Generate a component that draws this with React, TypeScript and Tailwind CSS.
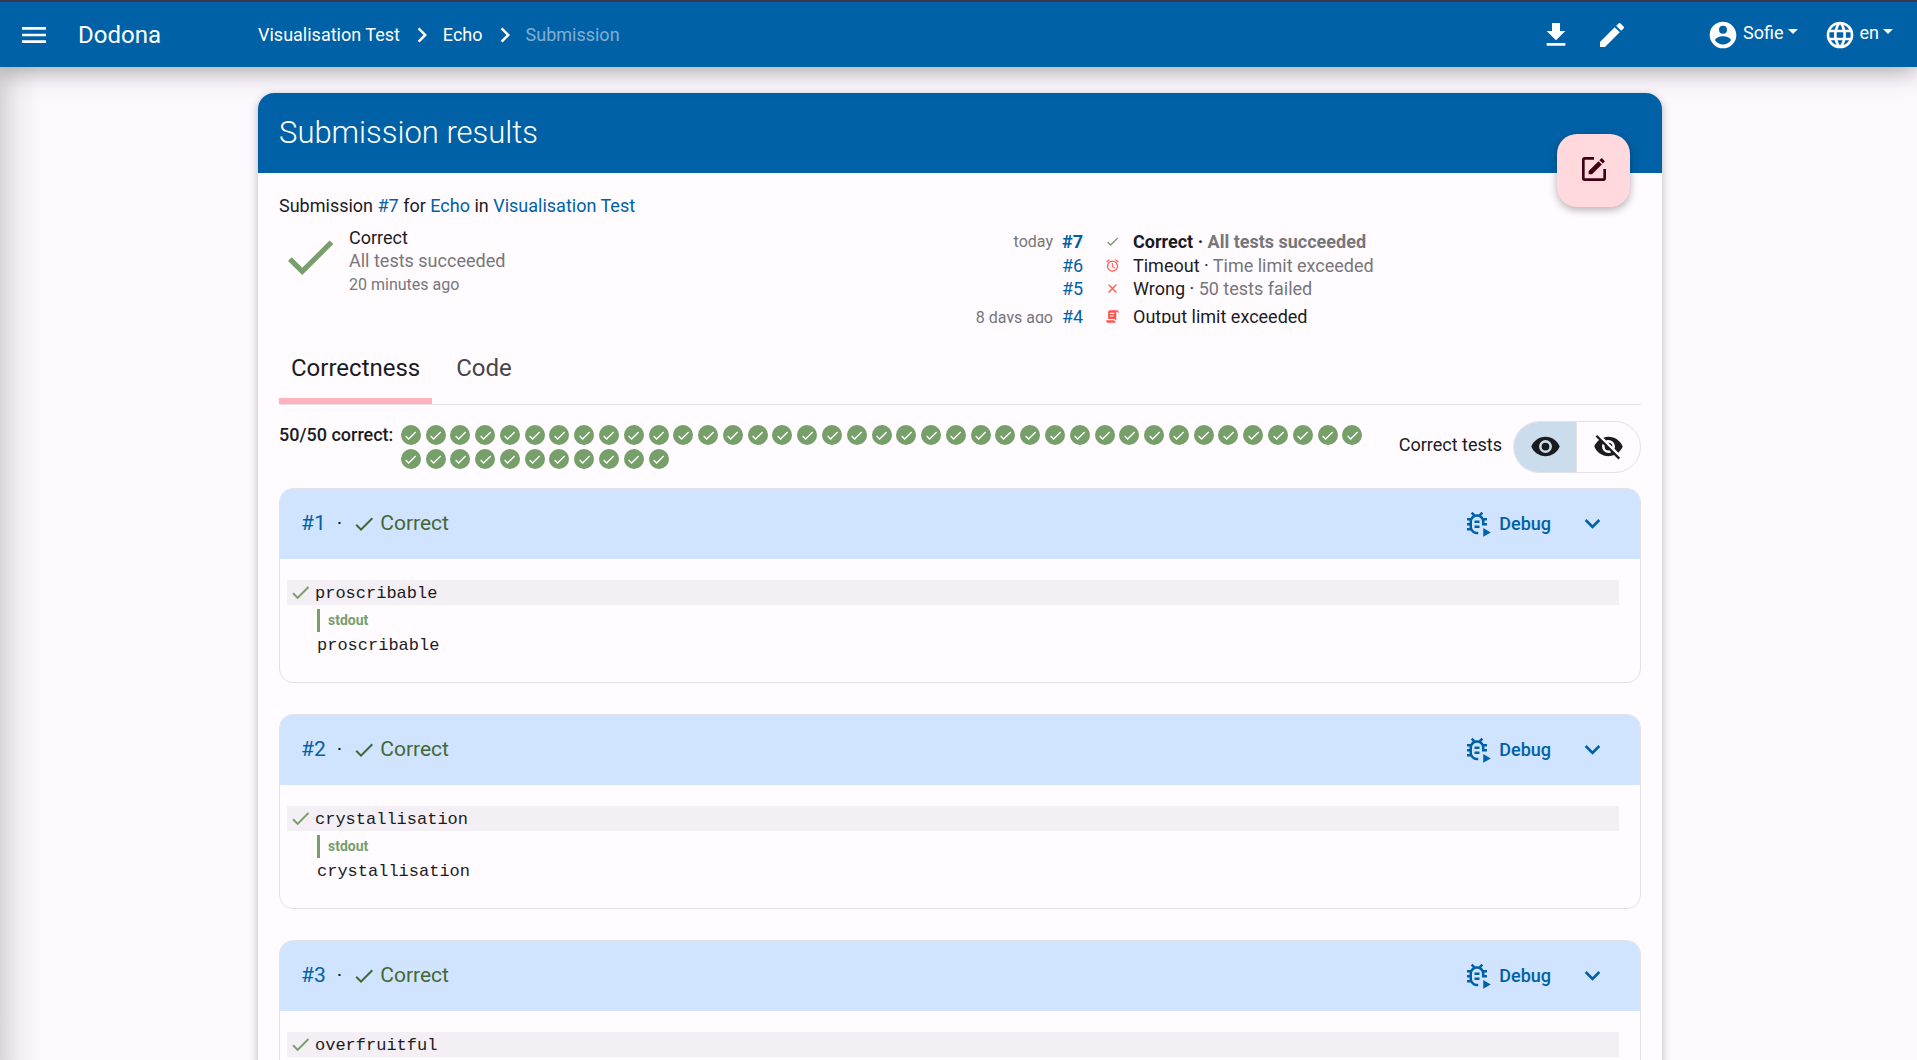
import type { ReactNode } from 'react'

const icons = {
  menu: 'M3,6H21V8H3V6M3,11H21V13H3V11M3,16H21V18H3V16Z',
  chevronRight: 'M8.59,16.58L13.17,12L8.59,7.41L10,6L16,12L10,18L8.59,16.58Z',
  chevronDown: 'M7.41,8.58L12,13.17L16.59,8.58L18,10L12,16L6,10L7.41,8.58Z',
  download: 'M5,20H19V18H5M19,9H15V3H9V9H5L12,16L19,9Z',
  pencil:
    'M20.71,7.04C21.1,6.65 21.1,6 20.71,5.63L18.37,3.29C18,2.9 17.35,2.9 16.96,3.29L15.12,5.12L18.87,8.87M3,17.25V21H6.75L17.81,9.93L14.06,6.18L3,17.25Z',
  account:
    'M12,19.2C9.5,19.2 7.29,17.92 6,16C6.03,14 10,12.9 12,12.9C14,12.9 17.97,14 18,16C16.71,17.92 14.5,19.2 12,19.2M12,5A3,3 0 0,1 15,8A3,3 0 0,1 12,11A3,3 0 0,1 9,8A3,3 0 0,1 12,5M12,2A10,10 0 0,0 2,12A10,10 0 0,0 12,22A10,10 0 0,0 22,12C22,6.47 17.5,2 12,2Z',
  web: 'M16.36,14C16.44,13.34 16.5,12.68 16.5,12C16.5,11.32 16.44,10.66 16.36,10H19.74C19.9,10.64 20,11.31 20,12C20,12.69 19.9,13.36 19.74,14M14.59,19.56C15.19,18.45 15.65,17.25 15.97,16H18.92C17.96,17.65 16.43,18.93 14.59,19.56M14.34,14H9.66C9.56,13.34 9.5,12.68 9.5,12C9.5,11.32 9.56,10.65 9.66,10H14.34C14.43,10.65 14.5,11.32 14.5,12C14.5,12.68 14.43,13.34 14.34,14M12,19.96C11.17,18.76 10.5,17.43 10.09,16H13.91C13.5,17.43 12.83,18.76 12,19.96M8,8H5.08C6.03,6.34 7.57,5.06 9.4,4.44C8.8,5.55 8.35,6.75 8,8M5.08,16H8C8.35,17.25 8.8,18.45 9.4,19.56C7.57,18.93 6.03,17.65 5.08,16M4.26,14C4.1,13.36 4,12.69 4,12C4,11.31 4.1,10.64 4.26,10H7.64C7.56,10.66 7.5,11.32 7.5,12C7.5,12.68 7.56,13.34 7.64,14M12,4.03C12.83,5.23 13.5,6.57 13.91,8H10.09C10.5,6.57 11.17,5.23 12,4.03M18.92,8H15.97C15.65,6.75 15.19,5.55 14.59,4.44C16.43,5.07 17.96,6.34 18.92,8M12,2C6.47,2 2,6.5 2,12A10,10 0 0,0 12,22A10,10 0 0,0 22,12A10,10 0 0,0 12,2Z',
  check: 'M21,7L9,19L3.5,13.5L4.91,12.09L9,16.17L19.59,5.59L21,7Z',
  close:
    'M19,6.41L17.59,5L12,10.59L6.41,5L5,6.41L10.59,12L5,17.59L6.41,19L12,13.41L17.59,19L19,17.59L13.41,12L19,6.41Z',
  alarm:
    'M12,20A7,7 0 0,1 5,13A7,7 0 0,1 12,6A7,7 0 0,1 19,13A7,7 0 0,1 12,20M12,4A9,9 0 0,0 3,13A9,9 0 0,0 12,22A9,9 0 0,0 21,13A9,9 0 0,0 12,4M12.5,8H11V14L15.75,16.85L16.5,15.62L12.5,13.25V8M7.88,3.39L6.6,1.86L2,5.71L3.29,7.24L7.88,3.39M22,5.72L17.4,1.86L16.11,3.39L20.71,7.25L22,5.72Z',
  script:
    'M17.8,20C17.4,21.2 16.3,22 15,22H5C3.3,22 2,20.7 2,19V18H5L14.2,18C14.6,19.2 15.7,20 17,20H17.8M19,2C20.7,2 22,3.3 22,5V6H20V5C20,4.4 19.6,4 19,4C18.4,4 18,4.4 18,5V18H17C16.4,18 16,17.6 16,17V16H5V5C5,3.3 6.3,2 8,2H19M8,6V8H15V6H8M8,10V12H14V10H8Z',
  eye: 'M12,9A3,3 0 0,0 9,12A3,3 0 0,0 12,15A3,3 0 0,0 15,12A3,3 0 0,0 12,9M12,17A5,5 0 0,1 7,12A5,5 0 0,1 12,7A5,5 0 0,1 17,12A5,5 0 0,1 12,17M12,4.5C7,4.5 2.73,7.61 1,12C2.73,16.39 7,19.5 12,19.5C17,19.5 21.27,16.39 23,12C21.27,7.61 17,4.5 12,4.5Z',
  eyeOff:
    'M11.83,9L15,12.16C15,12.11 15,12.05 15,12A3,3 0 0,0 12,9C11.94,9 11.89,9 11.83,9M7.53,9.8L9.08,11.35C9.03,11.56 9,11.77 9,12A3,3 0 0,0 12,15C12.22,15 12.44,14.97 12.65,14.92L14.2,16.47C13.53,16.8 12.79,17 12,17A5,5 0 0,1 7,12C7,11.21 7.2,10.47 7.53,9.8M2,4.27L4.28,6.55L4.73,7C3.08,8.3 1.78,10 1,12C2.73,16.39 7,19.5 12,19.5C13.55,19.5 15.03,19.2 16.38,18.66L16.81,19.08L19.73,22L21,20.73L3.27,3M12,7A5,5 0 0,1 17,12C17,12.64 16.87,13.26 16.64,13.82L19.57,16.75C21.07,15.5 22.27,13.86 23,12C21.27,7.61 17,4.5 12,4.5C10.6,4.5 9.26,4.75 8,5.2L10.17,7.35C10.74,7.13 11.35,7 12,7Z',
  squareEdit:
    'M5,3C3.89,3 3,3.89 3,5V19A2,2 0 0,0 5,21H19A2,2 0 0,0 21,19V12H19V19H5V5H12V3H5M17.78,4C17.61,4 17.43,4.07 17.3,4.2L16.08,5.41L18.58,7.91L19.8,6.7C20.06,6.44 20.06,6 19.8,5.75L18.25,4.2C18.12,4.07 17.95,4 17.78,4M15.37,6.12L8,13.5V16H10.5L17.87,8.62L15.37,6.12Z',
  bugPlay:
    'M20,8H17.19C16.74,7.2 16.12,6.5 15.37,6L17,4.41L15.59,3L13.42,5.17C12.96,5.06 12.49,5 12,5C11.5,5 11.05,5.06 10.59,5.17L8.41,3L7,4.41L8.62,6C7.87,6.5 7.26,7.21 6.81,8H4V10H6.09C6.03,10.33 6,10.66 6,11V12H4V14H6V15C6,15.34 6.03,15.67 6.09,16H4V18H6.81C8.1,20.2 10.6,21.4 13,20.9V18.9C10.5,19.5 8,17.6 8,15V11A4,4 0 0,1 12,7A4,4 0 0,1 16,11V14H20V12H18V11C18,10.66 17.97,10.33 17.91,10H20V8M14,10H10V12H14V10M10,14H14V16H10V14M17,16V23L23,19.5L17,16Z',
}

type IconName = keyof typeof icons

function Icon({ name, className }: { name: IconName; className: string }) {
  return (
    <svg viewBox="0 0 24 24" fill="currentColor" aria-hidden="true" className={`shrink-0 ${className}`}>
      <path d={icons[name]} />
    </svg>
  )
}

function Caret() {
  return (
    <svg viewBox="0 0 10 5" fill="currentColor" aria-hidden="true" className="mb-[6px] h-[5px] w-[10px]">
      <path d="M0,0H10L5,5Z" />
    </svg>
  )
}

function Navbar() {
  return (
    <header className="relative z-20 border-t-2 border-[#38384a] bg-[#0061a6] text-white shadow-[0_4px_24px_rgba(0,0,0,0.35)]">
      <nav className="flex h-[65px] items-center pr-6 pl-[18px]">
        <button type="button" aria-label="Menu">
          <Icon name="menu" className="size-8" />
        </button>
        <a href="#home" className="ml-7 w-[180px] text-[24px]">
          Dodona
        </a>
        <div className="flex items-center text-[18px]">
          <a href="#course">Visualisation Test</a>
          <Icon name="chevronRight" className="mr-[6px] ml-[7px] size-[30px]" />
          <a href="#exercise">Echo</a>
          <Icon name="chevronRight" className="mr-[6px] ml-[7px] size-[30px]" />
          <span className="text-white/50">Submission</span>
        </div>
        <div className="ml-auto flex items-center gap-6">
          <button type="button" aria-label="Download">
            <Icon name="download" className="size-8" />
          </button>
          <button type="button" aria-label="Edit">
            <Icon name="pencil" className="size-8" />
          </button>
        </div>
        <div className="ml-[79px] flex items-center gap-[26px] text-[18px]">
          <button type="button" className="flex items-center">
            <Icon name="account" className="mr-1 size-8" />
            <span className="mr-1 pb-1">Sofie</span>
            <Caret />
          </button>
          <button type="button" className="flex items-center">
            <Icon name="web" className="mr-1 size-8" />
            <span className="mr-1 pb-1">en</span>
            <Caret />
          </button>
        </div>
      </nav>
    </header>
  )
}

interface HistoryProps {
  date?: string
  id: number
  icon: IconName
  color: string
  status: string
  summary?: string
  className: string
}

const history: HistoryProps[] = [
  { date: 'today', id: 7, icon: 'check', color: 'text-[#769f6a]', status: 'Correct', summary: 'All tests succeeded', className: 'h-6 font-bold' },
  { id: 6, icon: 'alarm', color: 'text-[#ff5449]', status: 'Timeout', summary: 'Time limit exceeded', className: 'h-6' },
  { id: 5, icon: 'close', color: 'text-[#ff5449]', status: 'Wrong', summary: '50 tests failed', className: 'h-[23px]' },
  { date: '8 days ago', id: 4, icon: 'script', color: 'text-[#ff5449]', status: 'Output limit exceeded', className: 'h-[33px]' },
]

function HistoryRow({ date, id, icon, color, status, summary, className }: HistoryProps) {
  return (
    <li className={`flex items-center ${className}`}>
      <span className="w-[93px] pt-[2px] text-right text-[16px] font-normal text-[#77767a]">{date}</span>
      <a href={`#submission-${id}`} className="ml-[9px] w-[43px] text-[#0061a6]">
        #{id}
      </a>
      <Icon name={icon} className={`size-[15px] ${color}`} />
      <span className="ml-[13px]">
        {status}
        {summary && (
          <>
            {' · '}
            <span className="text-[#77767a]">{summary}</span>
          </>
        )}
      </span>
    </li>
  )
}

function Tab({ active, children }: { active?: boolean; children: ReactNode }) {
  return (
    <button
      type="button"
      role="tab"
      aria-selected={!!active}
      className={`h-[70px] border-b-[6px] px-3 pt-1 text-[24px] ${active ? 'border-[#ffb2be]' : 'border-transparent text-[#46464a]'}`}
    >
      {children}
    </button>
  )
}

function TestCard({ id, word }: { id: number; word: string }) {
  return (
    <section className="overflow-hidden rounded-[14px] border border-[#e4e1e6]">
      <div className="flex h-[70px] items-center bg-[#d0e4ff] pr-[32px] pl-[21px] text-[21px]">
        <a href={`#test-${id}`} className="text-[#0061a6]">
          #{id}
        </a>
        <span className="mr-[10px] ml-[11px]">·</span>
        <Icon name="check" className="size-6 text-[#446738]" />
        <span className="ml-1 text-[#446738]">Correct</span>
        <button type="button" className="ml-auto flex items-center pb-[2px] text-[18px] font-medium text-[#0061a6]">
          <Icon name="bugPlay" className="mr-[7px] size-[30px]" />
          Debug
        </button>
        <button type="button" aria-label="Collapse" className="ml-[26px] pb-[2px] text-[#0061a6]">
          <Icon name="chevronDown" className="size-[31px]" />
        </button>
      </div>
      <div className="pt-[21px] pr-[21px] pb-[26px] pl-[7px]">
        <div className="flex h-[25px] items-center bg-[#f3eff4]">
          <Icon name="check" className="ml-[2px] size-[23px] text-[#769f6a]" />
          <code className="ml-[3px] pt-[2px] font-['Liberation_Mono',monospace] text-[17px]">{word}</code>
        </div>
        <div className="mt-1 ml-[30px] flex h-[23px] items-center border-l-[3px] border-[#769f6a] pl-2 text-[14px] font-bold text-[#769f6a]">
          stdout
        </div>
        <pre className="mt-1 ml-[30px] font-['Liberation_Mono',monospace] text-[17px] leading-5">{word}</pre>
      </div>
    </section>
  )
}

const words = ['proscribable', 'crystallisation', 'overfruitful']

export default function App() {
  return (
    <div className="relative h-screen overflow-hidden bg-[#fcf8fd] font-[Roboto,sans-serif] text-[18px] text-[#1b1b1f]">
      {/* shadow of the closed drawer */}
      <div className="absolute inset-y-0 left-0 w-10 bg-linear-to-r from-black/14 via-black/4 to-transparent" />
      <Navbar />
      <main className="mt-[26px] pl-[3px]">
        <div className="mx-auto w-full max-w-[1404px] rounded-[16px] bg-[#fffbff] shadow-[0_2px_8px_rgba(0,0,0,0.28)]">
          <div className="relative flex h-20 items-center rounded-t-[16px] bg-[#0061a6] px-[21px]">
            <h1 className="text-[31px] font-light text-white">Submission results</h1>
            <button
              type="button"
              aria-label="Edit submission"
              className="absolute right-8 -bottom-[34px] flex size-[73px] items-center justify-center rounded-[20px] bg-[#ffd9de] pb-[3px] text-[#3f0016] shadow-[0_3px_8px_rgba(0,0,0,0.3)]"
            >
              <Icon name="squareEdit" className="size-8" />
            </button>
          </div>
          <div className="px-[21px] pt-5 pb-8">
            <p className="leading-[26px]">
              Submission <a href="#submission-7" className="text-[#0061a6]">#7</a> for{' '}
              <a href="#exercise" className="text-[#0061a6]">Echo</a> in{' '}
              <a href="#course" className="text-[#0061a6]">Visualisation Test</a>
            </p>
            <div className="grid h-[104px] grid-cols-2">
              <div className="flex pt-[7px]">
                <Icon name="check" className="size-[62px] text-[#769f6a]" />
                <div className="ml-2 leading-[23px]">
                  <div>Correct</div>
                  <div className="text-[#77767a]">All tests succeeded</div>
                  <div className="text-[16px] leading-[25px] text-[#77767a]">20 minutes ago</div>
                </div>
              </div>
              <ul className="overflow-hidden pt-[10px]">
                {history.map((row) => (
                  <HistoryRow key={row.id} {...row} />
                ))}
              </ul>
            </div>

            <div role="tablist" className="mt-[11px] flex gap-3 border-b border-[#e4e1e6]">
              <Tab active>Correctness</Tab>
              <Tab>Code</Tab>
            </div>

            {/* Summary */}
            <div className="mt-4 flex">
              <span className="mr-[5px] font-medium leading-7">50/50 correct:</span>
              <div className="mt-[2px] mr-[34px] grid flex-1 grid-cols-[repeat(39,minmax(0,1fr))] content-start">
                {Array.from({ length: 50 }, (_, i) => (
                  <a key={i} href={`#test-${i + 1}`} aria-label={`Test ${i + 1}`} className="flex h-6 items-center justify-center">
                    <span className="flex size-5 items-center justify-center rounded-full bg-[#769f6a]">
                      <Icon name="check" className="size-[15px] text-white" />
                    </span>
                  </a>
                ))}
              </div>
              <span className="mr-[11px] leading-[48px]">Correct tests</span>
              <div className="flex h-[52px] overflow-hidden rounded-full border border-[#e4e1e6]">
                <button type="button" aria-label="Show correct tests" className="flex w-[63px] items-center justify-center border-r border-[#e4e1e6] bg-[#cbdcec] pb-[2px]">
                  <Icon name="eye" className="size-[31px]" />
                </button>
                <button type="button" aria-label="Hide correct tests" className="flex w-[63px] items-center justify-center pb-[2px]">
                  <Icon name="eyeOff" className="size-[31px]" />
                </button>
              </div>
            </div>

            <div className="mt-[15px] flex flex-col gap-[31px]">
              {words.map((word, i) => (
                <TestCard key={word} id={i + 1} word={word} />
              ))}
            </div>
          </div>
        </div>
      </main>
    </div>
  )
}
